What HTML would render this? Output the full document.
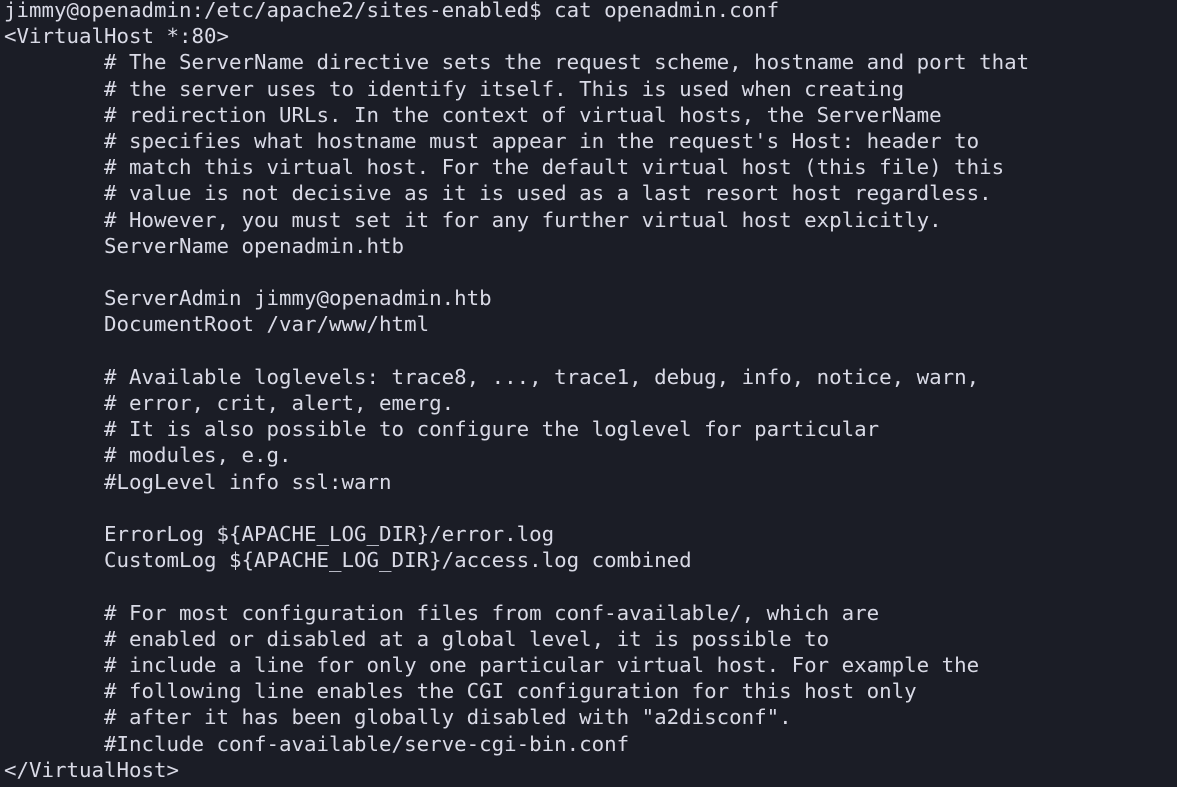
<!DOCTYPE html>
<html><head><meta charset="utf-8"><style>
html,body{margin:0;padding:0;background:#1b1d26;width:1177px;height:787px;overflow:hidden}
pre{margin:0;position:absolute;left:4px;top:-3px;font-family:"DejaVu Sans Mono","Liberation Mono",monospace;font-size:20.77px;line-height:26.2px;color:#d9dae6;white-space:pre}
</style></head><body><pre>jimmy@openadmin:/etc/apache2/sites-enabled$ cat openadmin.conf
&lt;VirtualHost *:80&gt;
        # The ServerName directive sets the request scheme, hostname and port that
        # the server uses to identify itself. This is used when creating
        # redirection URLs. In the context of virtual hosts, the ServerName
        # specifies what hostname must appear in the request's Host: header to
        # match this virtual host. For the default virtual host (this file) this
        # value is not decisive as it is used as a last resort host regardless.
        # However, you must set it for any further virtual host explicitly.
        ServerName openadmin.htb

        ServerAdmin jimmy@openadmin.htb
        DocumentRoot /var/www/html

        # Available loglevels: trace8, ..., trace1, debug, info, notice, warn,
        # error, crit, alert, emerg.
        # It is also possible to configure the loglevel for particular
        # modules, e.g.
        #LogLevel info ssl:warn

        ErrorLog ${APACHE_LOG_DIR}/error.log
        CustomLog ${APACHE_LOG_DIR}/access.log combined

        # For most configuration files from conf-available/, which are
        # enabled or disabled at a global level, it is possible to
        # include a line for only one particular virtual host. For example the
        # following line enables the CGI configuration for this host only
        # after it has been globally disabled with "a2disconf".
        #Include conf-available/serve-cgi-bin.conf
&lt;/VirtualHost&gt;</pre></body></html>
